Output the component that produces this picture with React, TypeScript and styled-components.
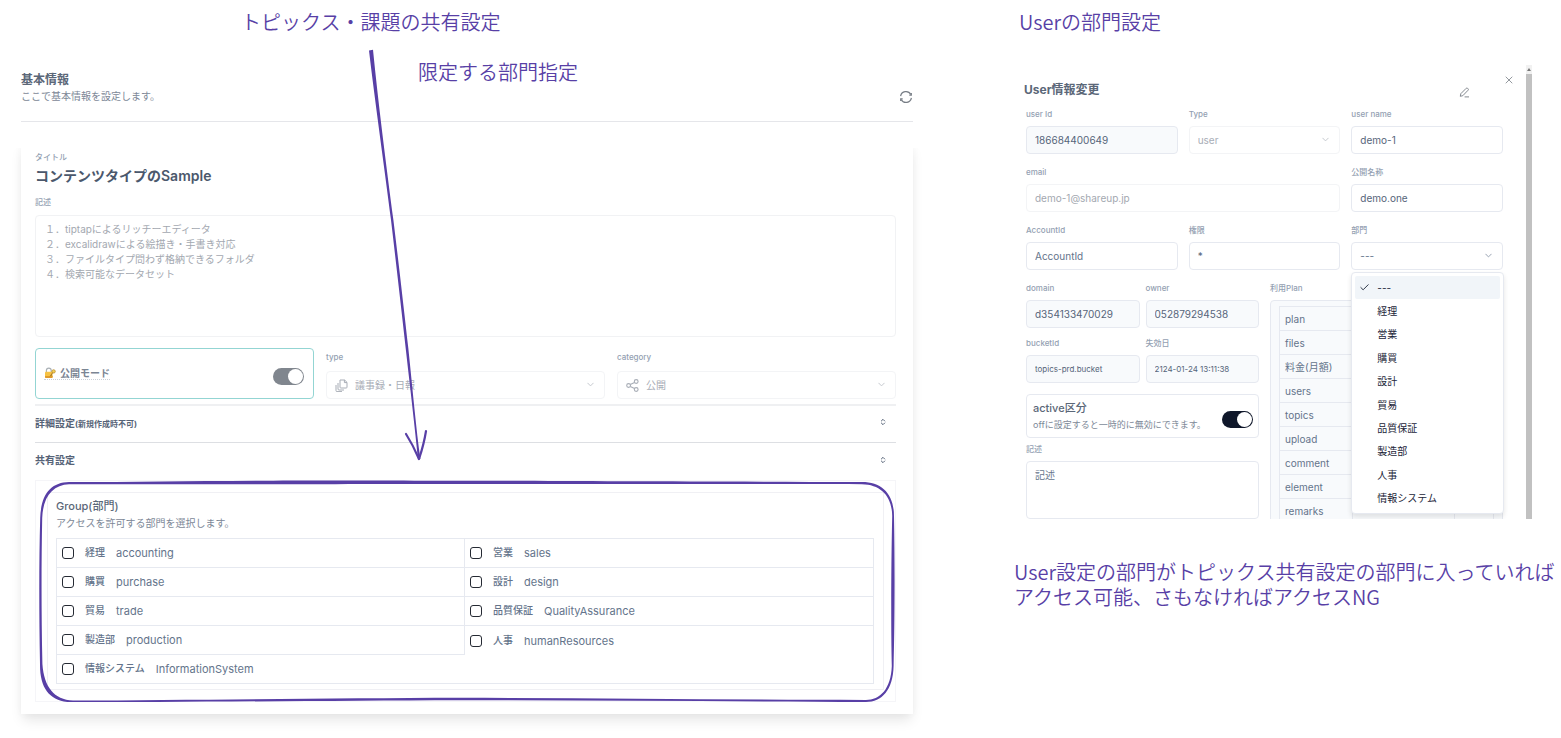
import React from "react";
import styled, { createGlobalStyle, css } from "styled-components";
import { Check, ChevronDown, ChevronsUpDown, X } from "lucide-react";

const violet = "#583fa6";
const line = "#e6e9f0";
const faint = "#f3f4f6";

const GlobalStyle = createGlobalStyle`
  * { box-sizing: border-box; }
  body {
    margin: 0;
    background: #fff;
    color: #5b6778;
    font: 10px/16px Inter, "Noto Sans CJK JP", sans-serif;
  }
  h1, h2, h3, p, ul { margin: 0; padding: 0; }
  input, select, textarea, button { font-family: inherit; color: inherit; }
`;

const Board = styled.main`
  display: grid;
  grid-template-columns: minmax(0, 892fr) minmax(0, 547fr);
  column-gap: 101px;
  padding: 10px 0 24px 21px;
`;

const Side = styled.section`
  position: relative;
`;

const Note = styled.p<{ $indent?: number }>`
  font: 350 20px/24px "Noto Sans CJK JP", sans-serif;
  color: ${violet};
  padding-left: ${(p) => p.$indent || 0}px;
`;

const FloatingNote = styled(Note)`
  position: absolute;
  top: 50px;
  left: 397px;
`;

const Arrow = styled.svg`
  position: absolute;
  top: 38px;
  left: 345px;
  pointer-events: none;
`;

const Header = styled.header`
  display: flex;
  justify-content: space-between;
  align-items: flex-end;
  margin-top: 38px;
  padding-bottom: 17px;
  border-bottom: 1px solid #e5e6ea;
`;

const Heading = styled.h2`
  font-size: 12px;
  line-height: 16px;
  font-weight: 700;
`;

const Sub = styled.p<{ $small?: boolean }>`
  font-size: ${(p) => (p.$small ? 9 : 10)}px;
  line-height: 16px;
  color: #7d8897;
`;

const IconButton = styled.button`
  display: flex;
  padding: 0;
  border: 0;
  background: none;
  color: #777d85;
`;

const Card = styled.form`
  margin-top: 20px;
  padding: 9px 17px 12px 14px;
  background: #fff;
  clip-path: inset(6px -24px -24px -24px);
  box-shadow: 0 8px 12px -2px rgba(0, 0, 0, 0.1), 0 0 8px rgba(0, 0, 0, 0.03);
`;

const Label = styled.label`
  display: block;
  font-size: 8px;
  line-height: 12px;
  font-weight: 500;
  color: #949fb2;
`;

const TitleInput = styled.input`
  display: block;
  width: 100%;
  height: 20px;
  margin: 2px 0 11px;
  padding: 0;
  border: 0;
  background: none;
  font-size: 14px;
  font-weight: 600;
  color: #4b586c;
`;

const box = css`
  display: block;
  width: 100%;
  border: 1px solid ${line};
  border-radius: 4px;
  background: #fff;
  font-size: 10px;
`;

const Description = styled.textarea`
  ${box}
  height: 122px;
  margin-top: 7px;
  padding: 6px 9px;
  border-color: #f1f2f4;
  resize: none;
  line-height: 15px;
  color: #a3a8b0;
`;

const Columns = styled.div`
  display: grid;
  grid-template-columns: repeat(3, minmax(0, 1fr));
  gap: 12px;
  margin-top: 11px;
  padding-bottom: 5px;
  border-bottom: 2px solid #eff0f2;
`;

const PublishBox = styled.div`
  display: flex;
  justify-content: space-between;
  height: 51px;
  padding: 17px 9px 0 8px;
  border: 1px solid #93d5d3;
  border-radius: 4px;
`;

const PublishLabel = styled.label`
  display: flex;
  align-items: center;
  gap: 4px;
  height: 14px;
  border-bottom: 1px dotted #cbd0d8;
  font-weight: 600;
  color: #7b8593;
`;

const Switch = styled.input<{ $color: string }>`
  appearance: none;
  width: 31px;
  height: 17px;
  margin: 2px 0 0;
  border-radius: 9px;
  background: ${(p) => p.$color};
  &::before {
    content: "";
    display: block;
    width: 15px;
    height: 15px;
    margin: 1px 1px 1px 15px;
    border-radius: 50%;
    background: #fff;
  }
`;

const Field = styled.div<{ $wide?: boolean }>`
  min-width: 0;
  grid-column: ${(p) => (p.$wide ? "span 2" : "auto")};
`;

const SelectWrap = styled.div<{ $faint?: boolean }>`
  position: relative;
  margin-top: 6px;
  color: ${(p) => (p.$faint ? "#a8adb6" : "#64748b")};
  > svg { position: absolute; top: 8px; left: 9px; pointer-events: none; }
  > svg:last-child { left: auto; right: 9px; opacity: 0.7; }
`;

const Select = styled.select<{ $faint?: boolean; $icon?: boolean }>`
  ${box}
  height: 28px;
  appearance: none;
  padding: 0 8px;
  padding-left: ${(p) => (p.$icon ? 28 : 8)}px;
  border-color: ${(p) => (p.$faint ? faint : line)};
  opacity: 1;
`;

const TypeField = styled(Field)`
  padding-top: 3px;
  ${SelectWrap} { margin-top: 8px; }
`;

const Accordion = styled.button<{ $line?: boolean }>`
  display: flex;
  justify-content: space-between;
  align-items: center;
  width: 100%;
  height: 37px;
  padding: 0 9px 4px 0;
  border: 0;
  border-bottom: ${(p) => (p.$line ? "1px solid #dddfe3" : "0")};
  background: none;
  font-size: 10px;
  font-weight: 700;
  color: #566377;
  small { font-size: 8px; }
`;

const GroupOuter = styled.div`
  position: relative;
  padding: 11px;
  border: 1px solid #f5f5f8;
`;

const GroupInner = styled.div`
  padding: 5px 9px 5px 8px;
  border: 1px solid #f0f0f4;
`;

const GroupTitle = styled.h3`
  font-size: 11px;
  line-height: 17px;
  font-weight: 500;
`;

const Frame = styled.svg`
  position: absolute;
  inset: -1px;
  width: calc(100% + 2px);
  height: calc(100% + 2px);
  pointer-events: none;
`;

const CheckGrid = styled.div`
  display: grid;
  grid-template-columns: 1fr 1fr;
  margin-top: 7px;
  border: 1px solid ${line};
`;

const CheckCell = styled.label<{ $right?: boolean; $bottom?: boolean }>`
  display: flex;
  align-items: center;
  gap: 11px;
  height: 29px;
  padding-left: 5px;
  border-right: ${(p) => (p.$right ? 1 : 0)}px solid ${line};
  border-bottom: ${(p) => (p.$bottom ? 1 : 0)}px solid ${line};
  font-size: 11px;
  color: #64748b;
  b { font-size: 10px; font-weight: 500; padding-bottom: 2px; }
  &:last-child { height: 28px; }
`;

const Checkbox = styled.input`
  appearance: none;
  width: 12px;
  height: 12px;
  margin: 0;
  border: 1px solid #252a33;
  border-radius: 3px;
`;

const Panel = styled.div`
  display: flex;
  justify-content: space-between;
  height: 454px;
  margin: 31px 29px 0 0;
  overflow: hidden;
`;

const PanelBody = styled.form`
  flex: 1;
  padding: 0 23px 0 12px;
`;

const PanelHead = styled.div`
  display: flex;
  align-items: flex-start;
  height: 43px;
  padding-top: 9px;
  margin: 0 -12px 0 -2px;
  ${Heading} { flex: 1; padding-top: 8px; }
`;

const EditButton = styled(IconButton)`
  margin: 13px 33px 0 0;
`;

const ScrollTrack = styled.div`
  width: 6px;
  background: #f1f1f1;
  padding-top: 9px;
`;

const ScrollArrow = styled.svg`
  display: block;
  margin: -6px 0 3px 1px;
`;

const ScrollThumb = styled.div`
  height: 446px;
  background: #c1c1c1;
`;

const FieldGrid = styled.div`
  display: grid;
  grid-template-columns: repeat(3, minmax(0, 1fr));
  gap: 12px 11px;
`;

const TextInput = styled.input<{ $tone?: "filled" | "faint"; $small?: boolean }>`
  ${box}
  height: 28px;
  margin-top: 6px;
  padding: 0 8px;
  font-size: ${(p) => (p.$small ? 8 : 10)}px;
  background: ${(p) => (p.$tone === "filled" ? "#f8fafc" : "#fff")};
  border-color: ${(p) => (p.$tone === "faint" ? faint : line)};
  color: ${(p) => (p.$tone === "faint" ? "#a3a8b0" : "#56657a")};
  &::placeholder { color: #64748b; }
`;

const Halves = styled.div`
  display: grid;
  grid-template-columns: repeat(2, minmax(0, 1fr));
  gap: 11px;
  margin-top: 12px;
`;

const Pair = styled.div`
  display: grid;
  grid-template-columns: repeat(2, minmax(0, 1fr));
  gap: 9px 6px;
`;

const ActiveBox = styled.div`
  display: flex;
  justify-content: space-between;
  align-items: center;
  height: 44px;
  margin: 11px 0 5px;
  padding: 0 5px 0 6px;
  border: 1px solid ${line};
  border-radius: 4px;
  white-space: nowrap;
  ${Switch} { flex: none; margin-top: 6px; }
`;

const ActiveTitle = styled.label`
  display: block;
  font-size: 11px;
  line-height: 17px;
  font-weight: 500;
`;

const Memo = styled.textarea`
  ${box}
  height: 58px;
  margin-top: 6px;
  padding: 5px 8px;
  line-height: 16px;
  resize: none;
  &::placeholder { color: #64748b; }
`;

const PlanBox = styled.div`
  margin-top: 6px;
  padding: 5px 8px;
  border: 1px solid ${line};
  border-radius: 4px;
  background: #f8fafc;
`;

const PlanTable = styled.table`
  width: 100%;
  border-collapse: collapse;
  table-layout: fixed;
  th, td {
    height: 24px;
    padding: 0 5px;
    border: 1px solid ${line};
    font-size: 10px;
    line-height: 16px;
    font-weight: 400;
    text-align: left;
    color: #64748b;
  }
`;

const Dropdown = styled.div`
  position: relative;
`;

const Menu = styled.ul`
  position: absolute;
  z-index: 1;
  top: 30px;
  left: 0;
  right: -1px;
  display: grid;
  grid-auto-rows: 1fr;
  height: 242px;
  padding: 3px;
  border: 1px solid ${line};
  border-radius: 4px;
  background: #fff;
  box-shadow: 0 3px 5px rgba(0, 0, 0, 0.1);
  list-style: none;
`;

const Option = styled.li<{ $active?: boolean }>`
  display: flex;
  align-items: center;
  padding-left: ${(p) => (p.$active ? 4 : 22)}px;
  gap: 7px;
  border-radius: 2px;
  background: ${(p) => (p.$active ? "#f1f5f9" : "transparent")};
  font-size: 10px;
  color: #1b2538;
`;

const BottomNote = styled(Note)`
  line-height: 25px;
  margin-top: 40px;
`;

const departments: [string, string][] = [
  ["経理", "accounting"],
  ["営業", "sales"],
  ["購買", "purchase"],
  ["設計", "design"],
  ["貿易", "trade"],
  ["品質保証", "QualityAssurance"],
  ["製造部", "production"],
  ["人事", "humanResources"],
  ["情報システム", "InformationSystem"],
];
const menuItems = ["---", "経理", "営業", "購買", "設計", "貿易", "品質保証", "製造部", "人事", "情報システム"];
const planRows = ["plan", "files", "料金(月額)", "users", "topics", "upload", "comment", "element", "remarks"];

const description = `１．tiptapによるリッチーエディータ
２．excalidrawによる絵描き・手書き対応
３．ファイルタイプ問わず格納できるフォルダ
４．検索可能なデータセット`;

const RefreshIcon = () => (
  <svg width="14" height="14" viewBox="0 0 14 14" fill="none" stroke="currentColor" strokeWidth="1.2">
    <path d="M1.6 6.2A5.5 5.5 0 0 1 11.8 4.4M12.4 7.8A5.5 5.5 0 0 1 2.2 9.6" />
    <path d="M12.3 2.9v2.2h-2M1.7 11.1V8.9h2" />
  </svg>
);

const LockIcon = () => (
  <svg width="12" height="12" viewBox="0 0 12 12" fill="none">
    <path d="M2.4 5V3.6a2.4 2.4 0 0 1 4.8 0V5" stroke="#a9b0b5" strokeWidth="1.2" />
    <rect x="1" y="4.8" width="7.6" height="6.2" rx="1" fill="#f6c244" />
    <path d="M1 9h7.6v1a1 1 0 0 1-1 1H2a1 1 0 0 1-1-1z" fill="#e09a2c" />
    <circle cx="9.6" cy="4.4" r="1.7" fill="#f3cf55" stroke="#b98a2b" strokeWidth=".7" />
    <path d="M8.7 5.6 6.2 9.3M7.2 8l1 .8" stroke="#a87924" strokeWidth="1" />
  </svg>
);

const CopyIcon = () => (
  <svg width="13" height="13" viewBox="0 0 13 13" fill="none" stroke="currentColor" strokeWidth="1">
    <path d="M5 1h4.6L12 3.4v4.8a.8.8 0 0 1-.8.8H5.8a.8.8 0 0 1-.8-.8zM9.4 1v2.6H12" />
    <path d="M3 4v6a1 1 0 0 0 1 1h5M1 6v5.6a1 1 0 0 0 1 1h5" />
  </svg>
);

const ShareIcon = () => (
  <svg width="13" height="13" viewBox="0 0 13 13" fill="none" stroke="currentColor" strokeWidth="1.1">
    <circle cx="2.6" cy="6.5" r="1.9" />
    <circle cx="10.2" cy="2.5" r="1.9" />
    <circle cx="10.2" cy="10.5" r="1.9" />
    <path d="m4.3 5.6 4.2-2.2M4.3 7.4l4.2 2.2" />
  </svg>
);

const PencilIcon = () => (
  <svg width="11" height="11" viewBox="0 0 11 11" fill="none" stroke="currentColor" strokeWidth=".9">
    <path d="m1.3 9.3.5-2.6 5.4-5.4a1 1 0 0 1 1.4 0l.5.5a1 1 0 0 1 0 1.4L3.8 8.7zM5.6 9.9H10" />
  </svg>
);

function Input(props: { id: string; label: string; value?: string; placeholder?: string; tone?: "filled" | "faint"; small?: boolean; wide?: boolean }) {
  return (
    <Field $wide={props.wide}>
      <Label htmlFor={props.id}>{props.label}</Label>
      <TextInput
        id={props.id}
        defaultValue={props.value}
        placeholder={props.placeholder}
        readOnly={!!props.tone}
        $tone={props.tone}
        $small={props.small}
      />
    </Field>
  );
}

export default function App() {
  return (
    <Board>
      <GlobalStyle />
      <Side>
        <Note $indent={220}>トピックス・課題の共有設定</Note>
        <FloatingNote>限定する部門指定</FloatingNote>
        <Header>
          <div>
            <Heading>基本情報</Heading>
            <Sub>ここで基本情報を設定します。</Sub>
          </div>
          <IconButton aria-label="更新"><RefreshIcon /></IconButton>
        </Header>

        <Card>
          <Label htmlFor="title">タイトル</Label>
          <TitleInput id="title" defaultValue="コンテンツタイプのSample" />
          <Label htmlFor="description">記述</Label>
          <Description id="description" defaultValue={description} />

          <Columns>
            <PublishBox>
              <PublishLabel htmlFor="publish"><LockIcon />公開モード</PublishLabel>
              <Switch id="publish" type="checkbox" role="switch" defaultChecked $color="#80868e" />
            </PublishBox>
            <TypeField>
              <Label htmlFor="type">type</Label>
              <SelectWrap $faint>
                <Select id="type" $faint $icon><option>議事録・日報</option></Select>
                <CopyIcon />
                <ChevronDown size={11} />
              </SelectWrap>
            </TypeField>
            <TypeField>
              <Label htmlFor="category">category</Label>
              <SelectWrap $faint>
                <Select id="category" $faint $icon><option>公開</option></Select>
                <ShareIcon />
                <ChevronDown size={11} />
              </SelectWrap>
            </TypeField>
          </Columns>

          <Accordion type="button" $line>
            <span>詳細設定<small>(新規作成時不可)</small></span>
            <ChevronsUpDown size={8} strokeWidth={3} />
          </Accordion>
          <Accordion type="button">
            <span>共有設定</span>
            <ChevronsUpDown size={8} strokeWidth={3} />
          </Accordion>

          <GroupOuter>
            <GroupInner>
              <GroupTitle>Group(部門)</GroupTitle>
              <Sub>アクセスを許可する部門を選択します。</Sub>
              <CheckGrid>
                {departments.map(([ja, en], i) => (
                  <CheckCell key={en} $right={i % 2 === 0 && i < 8} $bottom={i < 7}>
                    <Checkbox type="checkbox" />
                    <b>{ja}</b>
                    <span>{en}</span>
                  </CheckCell>
                ))}
              </CheckGrid>
            </GroupInner>
            <Frame viewBox="0 0 860 222" preserveAspectRatio="none" fill={violet}>
              <path
                fillRule="evenodd"
                d="M34 2C120 1.8 190 .4 300 .4S560 1.4 826 2C846 2 858 14 858 36C859 90 858.6 150 857.6 186C857 210 846 222 830 222C700 221.4 560 220.4 424 220.2C300 220.6 160 222 38 222.4C16 222 4.8 210 5 184C4 130 4 80 5.2 38C6 14 16 2.4 34 2ZM34 4.2C18 5 8 16 7.2 38C6.4 80 6.2 130 7.4 184C9 207 19 219.6 38 220.6C160 220 300 218.2 424 217.8C560 218.4 700 219.6 830 220C844 220 855 209 855.8 186C855 150 855 90 856.2 36C856 16 845 4.6 826 4.2C560 3.8 520 4.2 300 4.2S120 4.4 34 4.2Z"
              />
            </Frame>
          </GroupOuter>
        </Card>

        <Arrow width="70" height="420" viewBox="0 0 70 420" fill={violet}>
          <path d="M3 2.4 7 1.8C12 52 20 116 27.4 172C33 218 38 262 42.3 300C47 345 50 380 54.4 411L52 412C49 380 44.6 344 40 303C35.4 262 30.4 218 25 172C18 116 8.8 52 3 2.4Z" />
          <path d="M40 386Q47 397 53 411Q58 396 60 383" fill="none" stroke={violet} strokeWidth="2.2" strokeLinecap="round" strokeLinejoin="round" />
        </Arrow>
      </Side>

      <Side>
        <Note $indent={5}>Userの部門設定</Note>
        <Panel>
          <PanelBody>
            <PanelHead>
              <Heading>User情報変更</Heading>
              <EditButton type="button" aria-label="編集"><PencilIcon /></EditButton>
              <IconButton type="button" aria-label="閉じる"><X size={12} strokeWidth={1.6} /></IconButton>
            </PanelHead>
            <FieldGrid>
              <Input id="userid" label="user Id" value="186684400649" tone="filled" />
              <Field>
                <Label htmlFor="usertype">Type</Label>
                <SelectWrap $faint>
                  <Select id="usertype" $faint><option>user</option></Select>
                  <ChevronDown size={11} />
                </SelectWrap>
              </Field>
              <Input id="username" label="user name" value="demo-1" />
              <Input id="email" label="email" value="demo-1@shareup.jp" tone="faint" wide />
              <Input id="publicname" label="公開名称" value="demo.one" />
              <Input id="account" label="AccountId" placeholder="AccountId" />
              <Input id="auth" label="権限" value="*" />
              <Field>
                <Label htmlFor="dept">部門</Label>
                <Dropdown>
                  <SelectWrap>
                    <Select id="dept"><option>---</option></Select>
                    <ChevronDown size={11} />
                  </SelectWrap>
                  <Menu role="listbox" aria-label="部門">
                    {menuItems.map((item, i) => (
                      <Option key={item} role="option" aria-selected={i === 0} $active={i === 0}>
                        {i === 0 && <Check size={11} />}
                        {item}
                      </Option>
                    ))}
                  </Menu>
                </Dropdown>
              </Field>
            </FieldGrid>
            <Halves>
              <div>
                <Pair>
                  <Input id="domain" label="domain" value="d354133470029" tone="filled" />
                  <Input id="owner" label="owner" value="052879294538" tone="filled" />
                  <Input id="bucket" label="bucketId" value="topics-prd.bucket" tone="filled" small />
                  <Input id="expiry" label="失効日" value="2124-01-24 13:11:38" tone="filled" small />
                </Pair>
                <ActiveBox>
                  <div>
                    <ActiveTitle htmlFor="active">active区分</ActiveTitle>
                    <Sub $small>offに設定すると一時的に無効にできます。</Sub>
                  </div>
                  <Switch id="active" type="checkbox" role="switch" defaultChecked $color="#0f172a" />
                </ActiveBox>
                <Label htmlFor="memo">記述</Label>
                <Memo id="memo" placeholder="記述" />
              </div>
              <div>
                <Label as="h3">利用Plan</Label>
                <PlanBox>
                  <PlanTable>
                    <colgroup>
                      <col width="34%" />
                      <col width="48%" />
                      <col width="18%" />
                    </colgroup>
                    <tbody>
                      {planRows.map((row) => (
                        <tr key={row}>
                          <th scope="row">{row}</th>
                          <td />
                          <td />
                        </tr>
                      ))}
                    </tbody>
                  </PlanTable>
                </PlanBox>
              </div>
            </Halves>
          </PanelBody>
          <ScrollTrack>
            <ScrollArrow width="4" height="3" viewBox="0 0 4 3"><path d="M2 0 4 3H0z" fill="#777" /></ScrollArrow>
            <ScrollThumb />
          </ScrollTrack>
        </Panel>
        <BottomNote>
          User設定の部門がトピックス共有設定の部門に入っていれば
          <br />
          アクセス可能、さもなければアクセスNG
        </BottomNote>
      </Side>
    </Board>
  );
}
